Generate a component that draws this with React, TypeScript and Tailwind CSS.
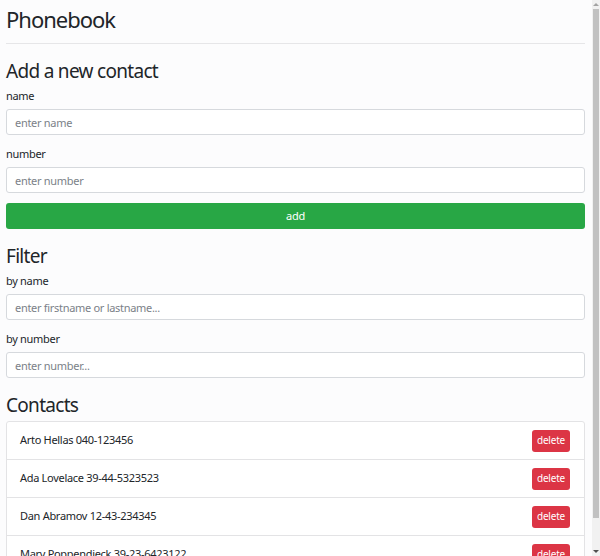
import React, { useState } from 'react';

type Person = { name: string; number: string };

const initialPersons: Person[] = [
  { name: 'Arto Hellas', number: '040-123456' },
  { name: 'Ada Lovelace', number: '39-44-5323523' },
  { name: 'Dan Abramov', number: '12-43-234345' },
  { name: 'Mary Poppendieck', number: '39-23-6423122' },
];

const inputClass =
  'block w-full h-[26px] rounded-[3px] border border-[#d6d9dd] bg-white px-[8px] text-[11px] tracking-[-0.3px] text-[#495057] placeholder:text-[#7b8188] outline-none';

const Field = ({ label, placeholder, first }: { label: string; placeholder: string; first?: boolean }) => (
  <div className={first ? 'mt-[4px]' : 'mt-[11px]'}>
    <label className="block text-[11px] leading-[16px] tracking-[-0.3px] text-[#212529]">{label}</label>
    <input className={`${inputClass} mt-[5px]`} placeholder={placeholder} />
  </div>
);

export default function App() {
  const [persons, setPersons] = useState<Person[]>(initialPersons);

  return (
    <div className="flex h-[556px] overflow-hidden bg-[#fcfcfd] font-['Noto_Sans',sans-serif] text-[#212529]">
      <main className="flex-1 pl-[6px] pr-[7px] pt-[4px]">
        <h1 className="text-[22px] leading-[30px] tracking-[-1px]">Phonebook</h1>
        <hr className="mt-[9px] border-t border-[#e6e6e8]" />

        <h2 className="mt-[15px] text-[19px] leading-[25px] tracking-[-0.7px]">Add a new contact</h2>
        <Field label="name" placeholder="enter name" first />
        <Field label="number" placeholder="enter number" />
        <button className="mt-[10px] block h-[26px] w-full rounded-[3px] bg-[#28a745] text-[11px] tracking-[-0.3px] text-white">
          add
        </button>

        <h2 className="mt-[15px] text-[19px] leading-[25px] tracking-[-0.7px]">Filter</h2>
        <Field label="by name" placeholder="enter firstname or lastname..." first />
        <Field label="by number" placeholder="enter number..." />

        <h2 className="mt-[15px] text-[19px] leading-[25px] tracking-[-0.7px]">Contacts</h2>
        <ul className="mt-[3px] rounded-[3px] border border-[#e3e3e5] bg-white">
          {persons.map((p, i) => (
            <li
              key={p.name}
              className={`flex items-center justify-between pl-[13px] pr-[14px] ${i > 0 ? 'h-[38px] border-t border-[#e3e3e5]' : 'h-[37px]'}`}
            >
              <span className="text-[11px] tracking-[-0.3px]">
                {p.name} {p.number}
              </span>
              <button
                onClick={() => setPersons(persons.filter((x) => x.name !== p.name))}
                className="h-[22px] w-[38px] rounded-[3px] bg-[#dc3545] text-[10px] tracking-[-0.2px] text-white"
              >
                delete
              </button>
            </li>
          ))}
        </ul>
      </main>

      {/* scrollbar */}
      <div className="flex w-[8px] flex-col bg-[#f1f1f1]">
        <div className="flex h-[9px] items-center justify-center">
          <div className="h-0 w-0 border-x-[3px] border-b-[3px] border-x-transparent border-b-[#a3a3a3]" />
        </div>
        <div className="mx-[1px] h-[509px] bg-[#c1c1c1]" />
        <div className="flex flex-1 items-end justify-center pb-[3px]">
          <div className="h-0 w-0 border-x-[3px] border-t-[3px] border-x-transparent border-t-[#505050]" />
        </div>
      </div>
    </div>
  );
}
